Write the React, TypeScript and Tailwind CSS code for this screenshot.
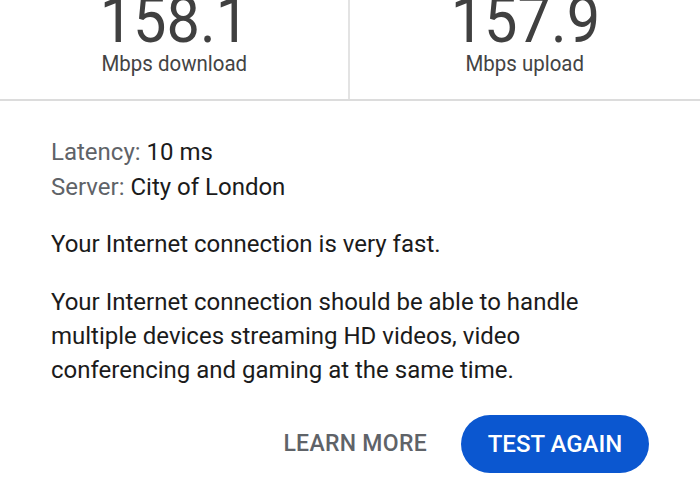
export default function App() {
  return (
    <div className="w-[700px] h-[500px] bg-white overflow-hidden font-['Roboto',sans-serif]">
      {/* speeds */}
      <div className="grid grid-cols-2 h-[101px] border-b-2 border-[#dcdcdc]">
        <div className="flex flex-col items-center border-r-2 border-[#e3e3e3] overflow-hidden">
          <div className="text-[64px] leading-[60px] mt-[-9px] text-[#404040] scale-x-[0.93]">158.1</div>
          <div className="text-[22px] leading-[26px] text-[#444] scale-x-[0.93]">Mbps download</div>
        </div>
        <div className="flex flex-col items-center overflow-hidden">
          <div className="text-[64px] leading-[60px] mt-[-9px] text-[#404040] scale-x-[0.93]">157.9</div>
          <div className="text-[22px] leading-[26px] text-[#444] scale-x-[0.93]">Mbps upload</div>
        </div>
      </div>

      <div className="px-[51px] pt-[34px] text-[24px] leading-[34px] text-[#1b1b1b]">
        <div>
          <span className="text-[#5f6368]">Latency: </span>10 ms
        </div>
        <div className="mt-[1px]">
          <span className="text-[#5f6368]">Server: </span>City of London
        </div>
        <p className="mt-[23px]">Your Internet connection is very fast.</p>
        <p className="mt-[24px]">
          Your Internet connection should be able to handle multiple devices streaming HD videos, video conferencing
          and gaming at the same time.
        </p>
      </div>

      <div className="flex justify-end items-center gap-[34px] pr-[51px] mt-[28px]">
        <button className="text-[23px] font-medium text-[#5f6368] tracking-[0.3px]">LEARN MORE</button>
        <button className="h-[58px] w-[188px] rounded-full bg-[#0b57d0] text-white text-[24px] font-medium">
          TEST AGAIN
        </button>
      </div>
    </div>
  );
}
